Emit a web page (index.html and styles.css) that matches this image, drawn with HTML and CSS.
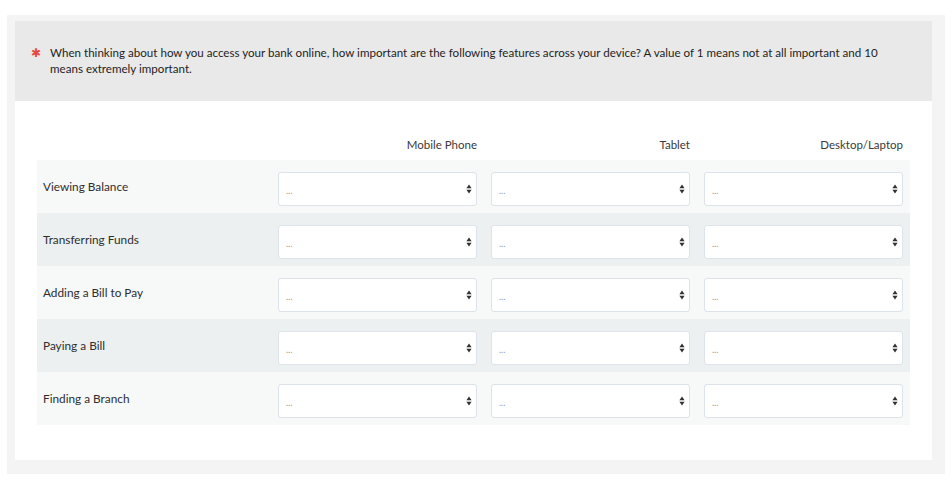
FILE: index.html
```html
<!DOCTYPE html>
<html lang="en">
<head>
    <meta charset="UTF-8">
    <meta name="viewport" content="width=device-width, initial-scale=1.0">
    <title>Survey question</title>
    <link rel="stylesheet" href="styles.css">
</head>
<body>
  <div class="frame">
    <div class="card">
      <div class="question">
        <span class="required">&#10033;</span>
        <p class="question-text">When thinking about how you access your bank online, how important are the following features across your device? A value of 1 means not at all important and 10 means extremely important.</p>
      </div>
      <div class="answers">
        <div class="matrix">
          <div class="head-row">
            <span></span>
            <span class="col-title">Mobile Phone</span>
            <span class="col-title">Tablet</span>
            <span class="col-title">Desktop/Laptop</span>
          </div>

          <div class="row">
            <span class="label">Viewing Balance</span>
            <div class="select"><span>...</span><svg viewBox="0 0 6 10"><path d="M3 0.5 L5.6 4.2 H0.4 Z M3 9.5 L5.6 5.8 H0.4 Z"/></svg></div>
            <div class="select"><span>...</span><svg viewBox="0 0 6 10"><path d="M3 0.5 L5.6 4.2 H0.4 Z M3 9.5 L5.6 5.8 H0.4 Z"/></svg></div>
            <div class="select"><span>...</span><svg viewBox="0 0 6 10"><path d="M3 0.5 L5.6 4.2 H0.4 Z M3 9.5 L5.6 5.8 H0.4 Z"/></svg></div>
          </div>
          <div class="row">
            <span class="label">Transferring Funds</span>
            <div class="select"><span>...</span><svg viewBox="0 0 6 10"><path d="M3 0.5 L5.6 4.2 H0.4 Z M3 9.5 L5.6 5.8 H0.4 Z"/></svg></div>
            <div class="select"><span>...</span><svg viewBox="0 0 6 10"><path d="M3 0.5 L5.6 4.2 H0.4 Z M3 9.5 L5.6 5.8 H0.4 Z"/></svg></div>
            <div class="select"><span>...</span><svg viewBox="0 0 6 10"><path d="M3 0.5 L5.6 4.2 H0.4 Z M3 9.5 L5.6 5.8 H0.4 Z"/></svg></div>
          </div>
          <div class="row">
            <span class="label">Adding a Bill to Pay</span>
            <div class="select"><span>...</span><svg viewBox="0 0 6 10"><path d="M3 0.5 L5.6 4.2 H0.4 Z M3 9.5 L5.6 5.8 H0.4 Z"/></svg></div>
            <div class="select"><span>...</span><svg viewBox="0 0 6 10"><path d="M3 0.5 L5.6 4.2 H0.4 Z M3 9.5 L5.6 5.8 H0.4 Z"/></svg></div>
            <div class="select"><span>...</span><svg viewBox="0 0 6 10"><path d="M3 0.5 L5.6 4.2 H0.4 Z M3 9.5 L5.6 5.8 H0.4 Z"/></svg></div>
          </div>
          <div class="row">
            <span class="label">Paying a Bill</span>
            <div class="select"><span>...</span><svg viewBox="0 0 6 10"><path d="M3 0.5 L5.6 4.2 H0.4 Z M3 9.5 L5.6 5.8 H0.4 Z"/></svg></div>
            <div class="select"><span>...</span><svg viewBox="0 0 6 10"><path d="M3 0.5 L5.6 4.2 H0.4 Z M3 9.5 L5.6 5.8 H0.4 Z"/></svg></div>
            <div class="select"><span>...</span><svg viewBox="0 0 6 10"><path d="M3 0.5 L5.6 4.2 H0.4 Z M3 9.5 L5.6 5.8 H0.4 Z"/></svg></div>
          </div>
          <div class="row">
            <span class="label">Finding a Branch</span>
            <div class="select"><span>...</span><svg viewBox="0 0 6 10"><path d="M3 0.5 L5.6 4.2 H0.4 Z M3 9.5 L5.6 5.8 H0.4 Z"/></svg></div>
            <div class="select"><span>...</span><svg viewBox="0 0 6 10"><path d="M3 0.5 L5.6 4.2 H0.4 Z M3 9.5 L5.6 5.8 H0.4 Z"/></svg></div>
            <div class="select"><span>...</span><svg viewBox="0 0 6 10"><path d="M3 0.5 L5.6 4.2 H0.4 Z M3 9.5 L5.6 5.8 H0.4 Z"/></svg></div>
          </div>
        </div>
      </div>
    </div>
  </div>
</body>
</html>
```

FILE: styles.css
```css
html, body {
    margin: 0;
    background-color: #ffffff;
}

body {
    padding: 15px 7px 0 7px;
    font-family: Lato, "Open Sans", sans-serif;
    font-size: 11.5px;
    color: #333;
}

.frame {
    width: 938px;
    box-sizing: border-box;
    background-color: #f4f4f4;
    padding: 6px 13px 14px 8px;
}

.card {
    background-color: #fff;
}

.question {
    display: flex;
    background-color: #e9e9e9;
    padding: 24px 40px 24px 16px;
}
.required {
    width: 19px;
    flex-shrink: 0;
    color: #e5473e;
    font-size: 12px;
    line-height: 16px;
    font-family: "DejaVu Sans", sans-serif;
}
.question-text {
    margin: 0;
    font-size: 11.6px;
    line-height: 16px;
    color: #1e1e1e;
}

.answers {
    padding: 0 22px 35px 22px;
}

.head-row, .row {
    display: grid;
    grid-template-columns: 227px repeat(3, 1fr);
    column-gap: 14px;
    padding-right: 7px;
}

.head-row {
    padding-top: 36px;
    padding-bottom: 7px;
    line-height: 16px;
}
.col-title {
    text-align: right;
    color: #3a3a3a;
}

.row {
    height: 53px;
    align-items: center;
    background-color: #f7f8f8;
}
.row:nth-of-type(odd) {
    background-color: #edf0f1;
}

.label {
    padding-left: 6px;
    font-size: 11.8px;
    color: #2e2e2e;
}

.select {
    margin-top: 5px;
    height: 34px;
    box-sizing: border-box;
    border: 1px solid #dce3ea;
    border-radius: 3px;
    background-color: #fff;
    display: flex;
    align-items: center;
    justify-content: space-between;
    padding: 0 4px 0 7px;
}
.select span {
    font-size: 9px;
    color: #999;
    padding-top: 2px;
}
.select svg {
    width: 6px;
    height: 10px;
    fill: #333;
}
```
